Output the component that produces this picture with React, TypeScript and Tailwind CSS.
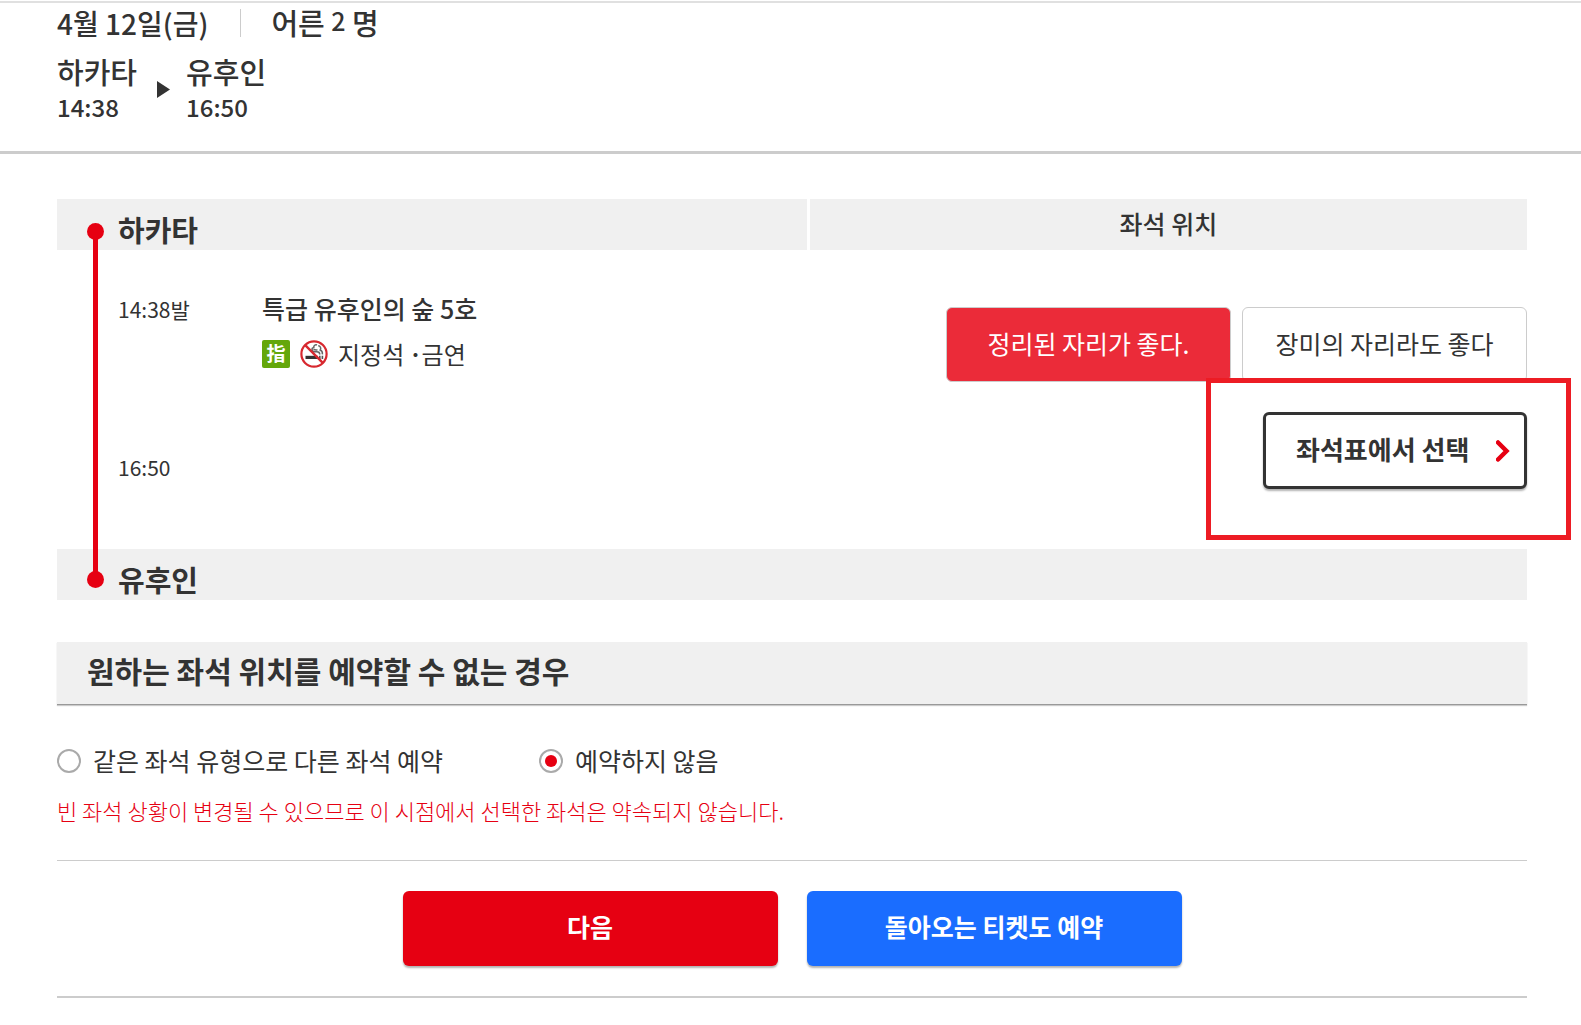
import { useState } from 'react'

const seatOptions = [
  { id: 'together', label: '정리된 자리가 좋다.' },
  { id: 'separate', label: '장미의 자리라도 좋다' },
]

const fallbackOptions = [
  { id: 'other', label: '같은 좌석 유형으로 다른 좌석 예약' },
  { id: 'none', label: '예약하지 않음' },
]

function ReservedIcon() {
  return (
    <span className="flex h-7 w-7 items-center justify-center rounded-xs bg-[#64a70b] pb-0.5 font-['Noto_Sans_CJK_JP',sans-serif] text-[19px] leading-6 font-bold text-white">
      指
    </span>
  )
}

function NoSmokingIcon() {
  return (
    <svg viewBox="0 0 28 28" className="h-7 w-7" aria-hidden="true">
      <circle cx="14" cy="14" r="12.6" fill="#fff" />
      <path d="M5.5 15.8h12.5v3.2H5.5z" fill="#333" />
      <path d="M19 15.8h1.6v3.2H19zM21.6 15.8h1.6v3.2h-1.6z" fill="#555" />
      <path
        d="M19.8 14.4c0-2-1-2.6-3-2.6h-2.4c-2.6 0-3.4-3.6-.6-4.2-.4-2 1.6-3.4 3.2-2.6M22.4 14.4c.2-2.4-.6-3.8-2.2-4.4 1.2-1.8.2-4-2-4.2M13.5 9.3c1 .8 2.5.6 4 .7"
        fill="none"
        stroke="#666"
        strokeWidth="1.5"
      />
      <circle cx="14" cy="14" r="12.6" fill="none" stroke="#d7282f" strokeWidth="2.2" />
      <path d="M5.2 5.2l17.6 17.6" stroke="#d7282f" strokeWidth="2.4" />
    </svg>
  )
}

export default function App() {
  const [seat, setSeat] = useState('together')
  const [fallback, setFallback] = useState('none')

  return (
    <div className="min-h-screen bg-white font-['Noto_Sans_CJK_KR',sans-serif] text-[#333]">
      {/* Trip summary */}
      <header className="border-b-3 border-[#ccc] pl-[57px] pr-[54px] pb-[26px] before:mt-px before:-mr-[54px] before:-ml-[57px] before:block before:h-0.5 before:bg-[#e0e0e0]">
        <div className="flex items-center pt-px text-[28px] leading-9 font-medium">
          <span>4월 12일(금)</span>
          <span className="mr-[30px] ml-8 h-7 w-px bg-[#ccc]" />
          <span className="text-[29px]">
            어른 <span className="relative -top-1 text-[25px]">2</span> 명
          </span>
        </div>
        <div className="mt-[11px] flex items-center gap-5">
          <div>
            <div className="text-[29px] leading-9 font-medium">하카타</div>
            <div className="text-2xl leading-9 font-medium">14:38</div>
          </div>
          <svg viewBox="0 0 13 17" className="h-[17px] w-[13px]" aria-hidden="true">
            <path d="M0 0l13 8.5L0 17z" fill="#333" />
          </svg>
          <div className="-ml-1">
            <div className="text-[29px] leading-9 font-medium">유후인</div>
            <div className="text-2xl leading-9 font-medium">16:50</div>
          </div>
        </div>
      </header>

      <main className="pt-[45px] pl-[57px] pr-[54px]">
        {/* Train section */}
        <div className="relative">
          <table className="w-full table-fixed border-separate border-spacing-0 text-left">
            <thead>
              <tr className="h-[51px] bg-[#f0f0f0]">
                <th className="w-[51%] pt-2 pl-[61px] text-[29px] leading-9 font-bold">하카타</th>
                <th className="border-l-3 border-white pb-1 text-center text-[25px] leading-9 font-medium">
                  좌석 위치
                </th>
              </tr>
            </thead>
            <tbody>
              <tr className="h-[299px] align-top">
                <td className="pt-[42px] pl-[61px]">
                  <div className="flex">
                    <div className="flex w-36 flex-col gap-[124px] text-[21px] leading-[34px]">
                      <span>14:38발</span>
                      <span>16:50</span>
                    </div>
                    <div>
                      <div className="text-[25px] leading-8 font-medium">특급 유후인의 숲 5호</div>
                      <div className="mt-3 flex items-center gap-2.5 text-2xl leading-9">
                        <ReservedIcon />
                        <NoSmokingIcon />
                        <span>지정석 ･금연</span>
                      </div>
                    </div>
                  </div>
                </td>
                <td className="pt-[57px]">
                  <div className="flex justify-end gap-[11px]">
                    {seatOptions.map((o) => (
                      <button
                        key={o.id}
                        type="button"
                        onClick={() => setSeat(o.id)}
                        className={`h-[75px] w-[285px] rounded-md border border-[#ccc] pb-1 text-[25px] leading-9 ${
                          seat === o.id ? 'bg-[#eb2b39] text-white' : 'bg-white text-[#333]'
                        }`}
                      >
                        {o.label}
                      </button>
                    ))}
                  </div>
                  <div className="mt-[30px] flex justify-end">
                    <div className="relative">
                      <div className="absolute -top-[34px] -right-11 -bottom-[51px] -left-[57px] border-5 border-[#ed1c24] bg-white" />
                      <button
                        type="button"
                        className="relative flex h-[77px] w-[264px] items-center justify-between rounded-md border-3 border-[#333] bg-white pr-3.5 pl-[30px] text-[26px] leading-9 font-bold shadow-[0_2px_2px_rgba(0,0,0,0.3)]"
                      >
                        <span className="pb-1">좌석표에서 선택</span>
                        <svg viewBox="0 0 14 22" className="h-[22px] w-3.5" aria-hidden="true">
                          <path
                            d="M2 2.5L10.5 11 2 19.5"
                            fill="none"
                            stroke="#e60012"
                            strokeWidth="4.5"
                            strokeLinecap="round"
                          />
                        </svg>
                      </button>
                    </div>
                  </div>
                </td>
              </tr>
            </tbody>
            <tfoot>
              <tr className="h-[51px] bg-[#f0f0f0]">
                <th colSpan={2} className="pt-2 pl-[61px] text-[29px] leading-9 font-bold">
                  유후인
                </th>
              </tr>
            </tfoot>
          </table>
          {/* Route line */}
          <div className="absolute top-6 bottom-3 left-[30px] flex w-[17px] flex-col items-center">
            <span className="h-[17px] w-[17px] rounded-full bg-[#e60012]" />
            <span className="-my-1 w-[5px] flex-1 bg-[#e60012]" />
            <span className="h-[17px] w-[17px] rounded-full bg-[#e60012]" />
          </div>
        </div>

        <h2 className="mt-[42px] flex h-[63px] items-center border-b border-[#999] bg-[#f0f0f0] pb-1.5 pl-[30px] text-[30px] leading-9 font-bold shadow-[0_1px_1px_rgba(0,0,0,0.2)]">
          원하는 좌석 위치를 예약할 수 없는 경우
        </h2>

        <div className="mt-[37px] flex gap-24">
          {fallbackOptions.map((o) => (
            <label key={o.id} className="flex items-center gap-3 text-[25px] leading-9">
              <input
                type="radio"
                name="fallback"
                checked={fallback === o.id}
                onChange={() => setFallback(o.id)}
                className="grid h-6 w-6 appearance-none place-items-center rounded-full border-2 border-[#aaa] bg-white before:h-3 before:w-3 before:rounded-full checked:before:bg-[#e60012]"
              />
              <span className="pb-0.5">{o.label}</span>
            </label>
          ))}
        </div>
        <p className="mt-3.5 text-[22px] leading-8 font-light text-[#e60012]">
          빈 좌석 상황이 변경될 수 있으므로 이 시점에서 선택한 좌석은 약속되지 않습니다.
        </p>

        <div className="mt-[34px] flex justify-center gap-[29px] border-t border-b-2 border-[#ccc] py-[30px]">
          <button
            type="button"
            className="h-[75px] w-[375px] rounded-md bg-[#e60012] pb-1.5 text-[25px] leading-9 font-bold text-white shadow-[0_2px_2px_rgba(0,0,0,0.3)]"
          >
            다음
          </button>
          <button
            type="button"
            className="h-[75px] w-[375px] rounded-md bg-[#1a6dff] pb-1.5 text-[25px] leading-9 font-bold text-white shadow-[0_2px_2px_rgba(0,0,0,0.3)]"
          >
            돌아오는 티켓도 예약
          </button>
        </div>
      </main>
    </div>
  )
}
